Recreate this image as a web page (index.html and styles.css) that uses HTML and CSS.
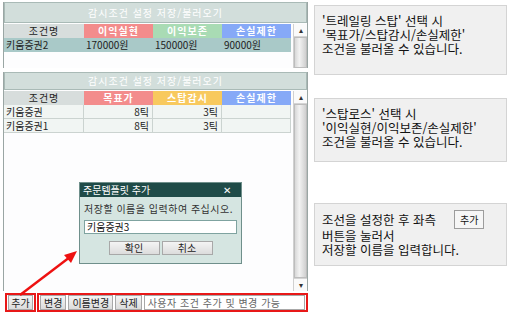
FILE: index.html
```html
<!DOCTYPE html>
<html lang="ko">
<head>
    <meta charset="UTF-8">
    <title>감시조건 설정 저장/불러오기</title>
    <link rel="stylesheet" href="styles.css">
</head>
<body>
    <div class="page">
        <div class="app">
            <div class="panel panel-top">
                <div class="panel-title">감시조건 설정 저장/불러오기</div>
                <div class="panel-body">
                    <div class="grid">
                        <div class="head name">조건명</div>
                        <div class="head pink">이익실현</div>
                        <div class="head green">이익보존</div>
                        <div class="head blue">손실제한</div>
                        <div class="cell sel">키움증권2</div>
                        <div class="cell sel">170000원</div>
                        <div class="cell sel">150000원</div>
                        <div class="cell sel">90000원</div>
                    </div>
                    <div class="scroll">
                        <div class="arrow up">&#9652;</div>
                        <div class="thumb"></div>
                    </div>
                </div>
            </div>

            <div class="panel panel-main">
                <div class="panel-title">감시조건 설정 저장/불러오기</div>
                <div class="panel-body">
                    <div class="grid">
                        <div class="head name">조건명</div>
                        <div class="head pink">목표가</div>
                        <div class="head yellow">스탑감시</div>
                        <div class="head blue">손실제한</div>
                        <div class="cell">키움증권</div>
                        <div class="cell num">8틱</div>
                        <div class="cell num">3틱</div>
                        <div class="cell"></div>
                        <div class="cell">키움증권1</div>
                        <div class="cell num">8틱</div>
                        <div class="cell num">3틱</div>
                        <div class="cell"></div>
                    </div>
                    <div class="scroll">
                        <div class="arrow up">&#9652;</div>
                        <div class="thumb"></div>
                        <div class="arrow down">&#9662;</div>
                    </div>
                </div>
            </div>

            <div class="toolbar">
                <div class="mark mark-add">
                    <button class="tb-btn">추가</button>
                </div>
                <div class="mark mark-rest">
                    <button class="tb-btn">변경</button>
                    <button class="tb-btn">이름변경</button>
                    <button class="tb-btn">삭제</button>
                    <div class="tb-field">사용자 조건 추가 및 변경 가능</div>
                </div>
            </div>
        </div>

        <div class="notes">
            <div class="note note-1">
                <div class="line">'트레일링 스탑' 선택 시</div>
                <div class="line">'목표가/스탑감시/손실제한'</div>
                <div class="line">조건을 불러올 수 있습니다.</div>
            </div>
            <div class="note note-2">
                <div class="line">'스탑로스' 선택 시</div>
                <div class="line">'이익실현/이익보존/손실제한'</div>
                <div class="line">조건을 불러올 수 있습니다.</div>
            </div>
            <div class="note note-3">
                <div class="note-line">조선을 설정한 후 좌측 <span class="mini-btn">추가</span></div>
                <div class="line">버튼을 눌러서</div>
                <div class="line">저장할 이름을 입력합니다.</div>
            </div>
        </div>

        <!-- dialog floats over the list -->
        <div class="dialog">
            <div class="dialog-title">
                <span>주문템플릿 추가</span>
                <span class="close">&#10005;</span>
            </div>
            <div class="dialog-body">
                <div class="dialog-msg">저장할 이름을 입력하여 주십시오.</div>
                <div class="dialog-input">키움증권3</div>
                <div class="dialog-btns">
                    <button class="dlg-btn">확인</button>
                    <button class="dlg-btn">취소</button>
                </div>
            </div>
        </div>

        <svg class="pointer" width="510" height="317" viewBox="0 0 510 317">
            <line x1="20" y1="295" x2="70" y2="257" stroke="#ee1111" stroke-width="2.4"/>
            <polygon points="77,251 64,255 71,263" fill="#ee1111"/>
        </svg>
    </div>
</body>
</html>
```

FILE: styles.css
```css
body {
    margin: 0;
    background-color: #fff;
    font-family: "Noto Sans CJK KR", "Noto Sans", sans-serif;
}

.page {
    position: relative;
    width: 510px;
    height: 317px;
    display: flex;
    overflow: hidden;
}

.app {
    width: 305px;
    margin-left: 3px;
    padding-top: 2px;
    display: flex;
    flex-direction: column;
    font-size: 10px;
    color: #222;
}

.panel {
    border-left: 1px solid #9aa6a4;
    border-right: 1px solid #9aa6a4;
    background-color: #fdfdfe;
    display: flex;
    flex-direction: column;
}

.panel-top {
    height: 66px;
}

.panel-main {
    margin-top: 4px;
    height: 219px;
}

.panel-title {
    height: 19px;
    line-height: 19px;
    text-align: center;
    color: #fff;
    letter-spacing: 1px;
    background-color: #d2dedb;
    border: 1px solid #a9bab6;
    font-size: 10px;
    flex: none;
}

.panel-main .panel-title {
    height: 16px;
    line-height: 16px;
}

.panel-body {
    flex: 1;
    display: flex;
    min-height: 0;
}

.grid {
    flex: 1;
    display: grid;
    grid-template-columns: 80px 69px 69px 69px;
    grid-auto-rows: 14px;
    align-content: start;
    padding-top: 1px;
}

.head {
    text-align: center;
    line-height: 14px;
    color: #fff;
    font-weight: bold;
    letter-spacing: 1px;
}

.head.name { background-color: #d7dddc; color: #222; font-weight: normal; }
.head.pink { background-color: #f38c8c; }
.head.green { background-color: #a9dbb4; }
.head.blue { background-color: #86a9f7; }
.head.yellow { background-color: #f8c95e; }

.cell {
    line-height: 13px;
    padding-left: 2px;
    background-color: #f1f5f3;
    border-right: 1px solid #cbd3d0;
    border-bottom: 1px solid #cbd3d0;
    white-space: nowrap;
}

.cell.num {
    text-align: right;
    padding-right: 3px;
    padding-left: 0;
}

.cell.sel {
    background-color: #a9c9c8;
    border-color: #a9c9c8;
}

.scroll {
    width: 13px;
    flex: none;
    display: flex;
    flex-direction: column;
    margin-top: 1px;
    background-color: #f4f4f4;
    border-left: 1px solid #d0d0d0;
}

.arrow {
    height: 12px;
    line-height: 12px;
    text-align: center;
    font-size: 8px;
    color: #333;
    background-color: #fafafa;
    border-bottom: 1px solid #d4d4d4;
    flex: none;
}

.arrow.down {
    border-top: 1px solid #d4d4d4;
    border-bottom: none;
}

.thumb {
    flex: 1;
    background: linear-gradient(to right, #d8d8d8, #f2f2f2 40%, #cfcfcf);
    border: 1px solid #bdbdbd;
}

.toolbar {
    display: flex;
    height: 19px;
    margin-top: 2px;
    margin-left: 2px;
}

.mark {
    border: 2px solid #e81818;
    display: flex;
    align-items: center;
    gap: 2px;
    padding: 0 1px;
    box-sizing: border-box;
}

.mark-add {
    width: 31px;
}

.mark-rest {
    flex: 1;
    margin-left: 1px;
}

.tb-btn,
.dlg-btn {
    font-family: inherit;
    font-size: 10px;
    color: #222;
    padding: 0;
    white-space: nowrap;
    background: linear-gradient(#f4f4f4, #dcdcdc);
    border: 1px solid #a8a8a8;
    border-radius: 0;
}

.tb-btn {
    height: 15px;
    line-height: 13px;
    padding: 0 3px;
}

.mark-add .tb-btn {
    width: 25px;
    padding: 0;
}

.tb-field {
    flex: 1;
    height: 15px;
    line-height: 13px;
    padding-left: 3px;
    border: 1px solid #a8a8a8;
    background-color: #fff;
    color: #666;
    letter-spacing: 0.5px;
    white-space: nowrap;
    box-sizing: border-box;
}

.notes {
    margin-left: 6px;
    width: 193px;
    display: flex;
    flex-direction: column;
    font-size: 12.5px;
    color: #111;
}

.note {
    background-color: #f0f0f0;
    border: 1px solid #d4d4d4;
    padding: 8px 7px;
    white-space: nowrap;
    box-sizing: border-box;
}

.line {
    height: 14px;
    line-height: 14px;
}

.note-1 {
    margin-top: 5px;
    height: 70px;
}

.note-2 {
    margin-top: 23px;
    height: 64px;
}

.note-3 {
    margin-top: 41px;
    height: 63px;
    padding-top: 5px;
}

.note-line {
    display: flex;
    align-items: center;
    height: 20px;
}

.mini-btn {
    margin-left: 18px;
    font-size: 10px;
    line-height: 17px;
    padding: 0 5px;
    border: 1px solid #9c9c9c;
    background-color: #f6f6f6;
}

.dialog {
    position: absolute;
    left: 79px;
    top: 182px;
    width: 163px;
    height: 82px;
    border: 1px solid #6f8f8b;
    background-color: #d5e5e1;
    font-size: 10px;
    box-sizing: border-box;
}

.dialog-title {
    height: 14px;
    line-height: 14px;
    padding: 0 10px 0 3px;
    color: #fff;
    background-color: #1f4b48;
    display: flex;
    justify-content: space-between;
}

.close {
    font-size: 10px;
}

.dialog-body {
    padding: 4px 4px 0;
}

.dialog-msg {
    color: #333;
    letter-spacing: 0.5px;
    line-height: 16px;
}

.dialog-input {
    margin-top: 3px;
    height: 14px;
    line-height: 12px;
    padding-left: 2px;
    background-color: #fff;
    border: 1px solid #7fa3a0;
    box-sizing: border-box;
    color: #111;
}

.dialog-btns {
    display: flex;
    justify-content: center;
    gap: 2px;
    margin-top: 7px;
}

.dlg-btn {
    width: 51px;
    height: 14px;
    line-height: 12px;
}

.pointer {
    position: absolute;
    left: 0;
    top: 0;
    pointer-events: none;
}
```
